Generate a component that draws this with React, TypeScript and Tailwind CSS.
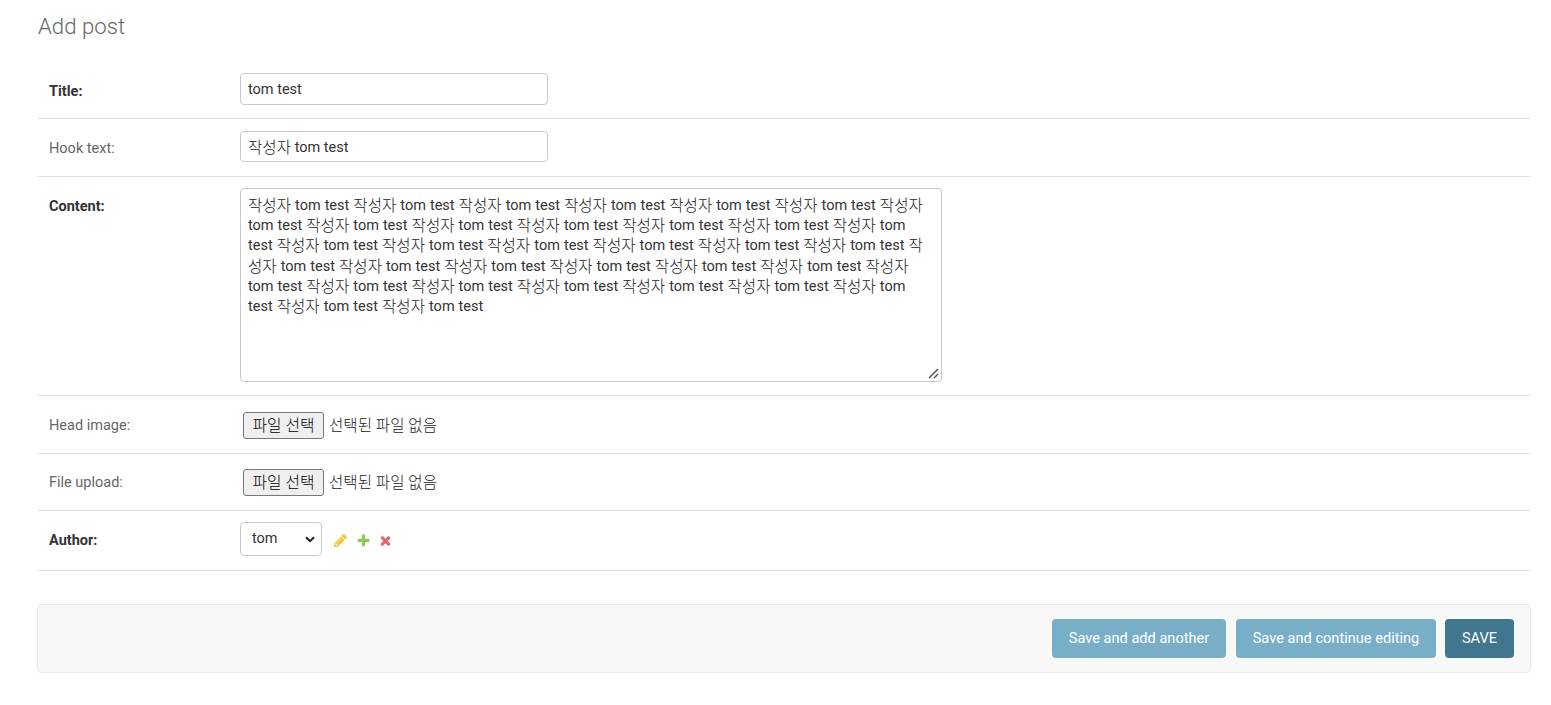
import { ReactNode } from "react";

const KO = "font-light text-[15.6px] leading-[16px] align-[-1px] text-[#222]";

// Form row
function Row({ label, required, className, children }: { label: string; required?: boolean; className: string; children: ReactNode }) {
  return (
    <div className={`flex border-b border-[#e3e3e3] ${className}`}>
      <label className={`w-[203px] shrink-0 pl-3 text-[14.5px] ${required ? "font-bold text-[#333]" : "text-[#666]"}`}>{label}</label>
      <div className="flex items-center">{children}</div>
    </div>
  );
}

function FileField() {
  return (
    <div className="flex items-center pl-[3px]">
      <button type="button" className="h-[27px] w-[81px] rounded-[3px] border border-[#767676] bg-[#efefef] text-[15.8px] font-light text-black">
        파일 선택
      </button>
      <span className={`ml-[5px] ${KO}`}>선택된 파일 없음</span>
    </div>
  );
}

export default function App() {
  return (
    <div className="min-h-[705px] bg-white pr-5 pl-[37px] font-['Roboto','Noto_Sans_CJK_KR',sans-serif]">
      <h2 className="pt-[12px] pb-[21px] pl-[1px] text-[22.2px] leading-[28px] font-light text-[#666]">Add post</h2>

      <form>
        <Row label="Title:" required className="pt-[12px] pb-[13px] [&>label]:pt-[8px]">
          <input defaultValue="tom test" className="h-[32px] w-[308px] rounded-[4px] border border-[#c9c9c9] px-[7px] text-[14.5px] text-[#333] outline-none" />
        </Row>
        <Row label="Hook text:" className="pt-[12px] pb-[14px] [&>label]:pt-[7px]">
          <div className="h-[31px] w-[308px] rounded-[4px] border border-[#c9c9c9] px-[7px] text-[14.5px] leading-[31px] whitespace-pre text-[#333]">
            <span className={KO}>작성자</span> tom test
          </div>
        </Row>
        <Row label="Content:" required className="pt-[11px] pb-[13px] [&>label]:pt-[8px]">
          <div className="relative h-[194px] w-[702px] rounded-[4px] border border-[#c9c9c9] px-[7px] pt-[7px] text-[14.5px] leading-[20.2px] [word-spacing:0.4px] text-[#333]">
            {Array.from({ length: 34 }, (_, i) => (
              <span key={i}>
                <span className={KO}>작성자</span> tom test{" "}
              </span>
            ))}
            {/* Resize handle */}
            <svg className="absolute right-[2px] bottom-[2px]" width="11" height="11" viewBox="0 0 11 11" aria-hidden="true">
              <path d="M1 10 10 1M6 10l4-4" stroke="#555" strokeWidth="1.5" fill="none" />
            </svg>
          </div>
        </Row>
        <Row label="Head image:" className="pt-[16px] pb-[14px] [&>label]:pt-[3px]">
          <FileField />
        </Row>
        <Row label="File upload:" className="pt-[15px] pb-[14px] [&>label]:pt-[3px]">
          <FileField />
        </Row>
        <Row label="Author:" required className="pt-[11px] pb-[14px] [&>label]:pt-[8px]">
          <div className="relative">
            <select className="block h-[34px] w-[82px] appearance-none rounded-[4px] border border-[#c9c9c9] bg-white pl-[11px] text-[14.5px] text-[#333] outline-none">
              <option>tom</option>
            </select>
            <svg className="pointer-events-none absolute top-[14px] right-[7px]" width="10" height="7" viewBox="0 0 10 7" aria-hidden="true">
              <path d="M1 1.200 5 5.200 9 1.200" stroke="#222" strokeWidth="2" fill="none" />
            </svg>
          </div>
          {/* Related object icons */}
          <div className="mt-[2px] ml-[11px] flex items-center gap-[7px] opacity-80">
            <svg className="mr-[1px]" width="15" height="15" viewBox="0 0 1792 1792" aria-hidden="true">
              <path fill="#efb80b" d="M491 1536l91-91-235-235-91 91v107h128v128h107zm523-928q0-22-22-22-10 0-17 7l-542 542q-7 7-7 17 0 22 22 22 10 0 17-7l542-542q7-7 7-17zm-54-192l416 416-832 832h-416v-416zm683 96q0 53-37 90l-166 166-416-416 166-165q36-38 90-38 53 0 91 38l235 234q37 39 37 91z" />
            </svg>
            <svg width="15" height="15" viewBox="0 0 1792 1792" aria-hidden="true">
              <path fill="#70bf2b" d="M1600 796v192q0 40-28 68t-68 28h-416v416q0 40-28 68t-68 28h-192q-40 0-68-28t-28-68v-416h-416q-40 0-68-28t-28-68v-192q0-40 28-68t68-28h416v-416q0-40 28-68t68-28h192q40 0 68 28t28 68v416h416q40 0 68 28t28 68z" />
            </svg>
            <svg width="15" height="15" viewBox="0 0 1792 1792" aria-hidden="true">
              <path fill="#dd4646" d="M1490 1322q0 40-28 68l-136 136q-28 28-68 28t-68-28l-294-294-294 294q-28 28-68 28t-68-28l-136-136q-28-28-28-68t28-68l294-294-294-294q-28-28-28-68t28-68l136-136q28-28 68-28t68 28l294 294 294-294q28-28 68-28t68 28l136 136q28 28 28 68t-28 68l-294 294 294 294q28 28 28 68z" />
            </svg>
          </div>
        </Row>

        <div className="mt-[33px] flex justify-end rounded-[4px] border border-[#eaeaea] bg-[#f8f8f8] py-[14px] pr-[16px]">
          <button type="button" className="h-[39px] w-[174px] rounded-[4px] bg-[#79aec8] text-[14.6px] text-white">Save and add another</button>
          <button type="button" className="ml-[10px] h-[39px] w-[200px] rounded-[4px] bg-[#79aec8] text-[14.6px] text-white">Save and continue editing</button>
          <button type="button" className="ml-[9px] h-[39px] w-[69px] rounded-[4px] bg-[#417690] text-[14.6px] text-white">SAVE</button>
        </div>
      </form>
    </div>
  );
}
